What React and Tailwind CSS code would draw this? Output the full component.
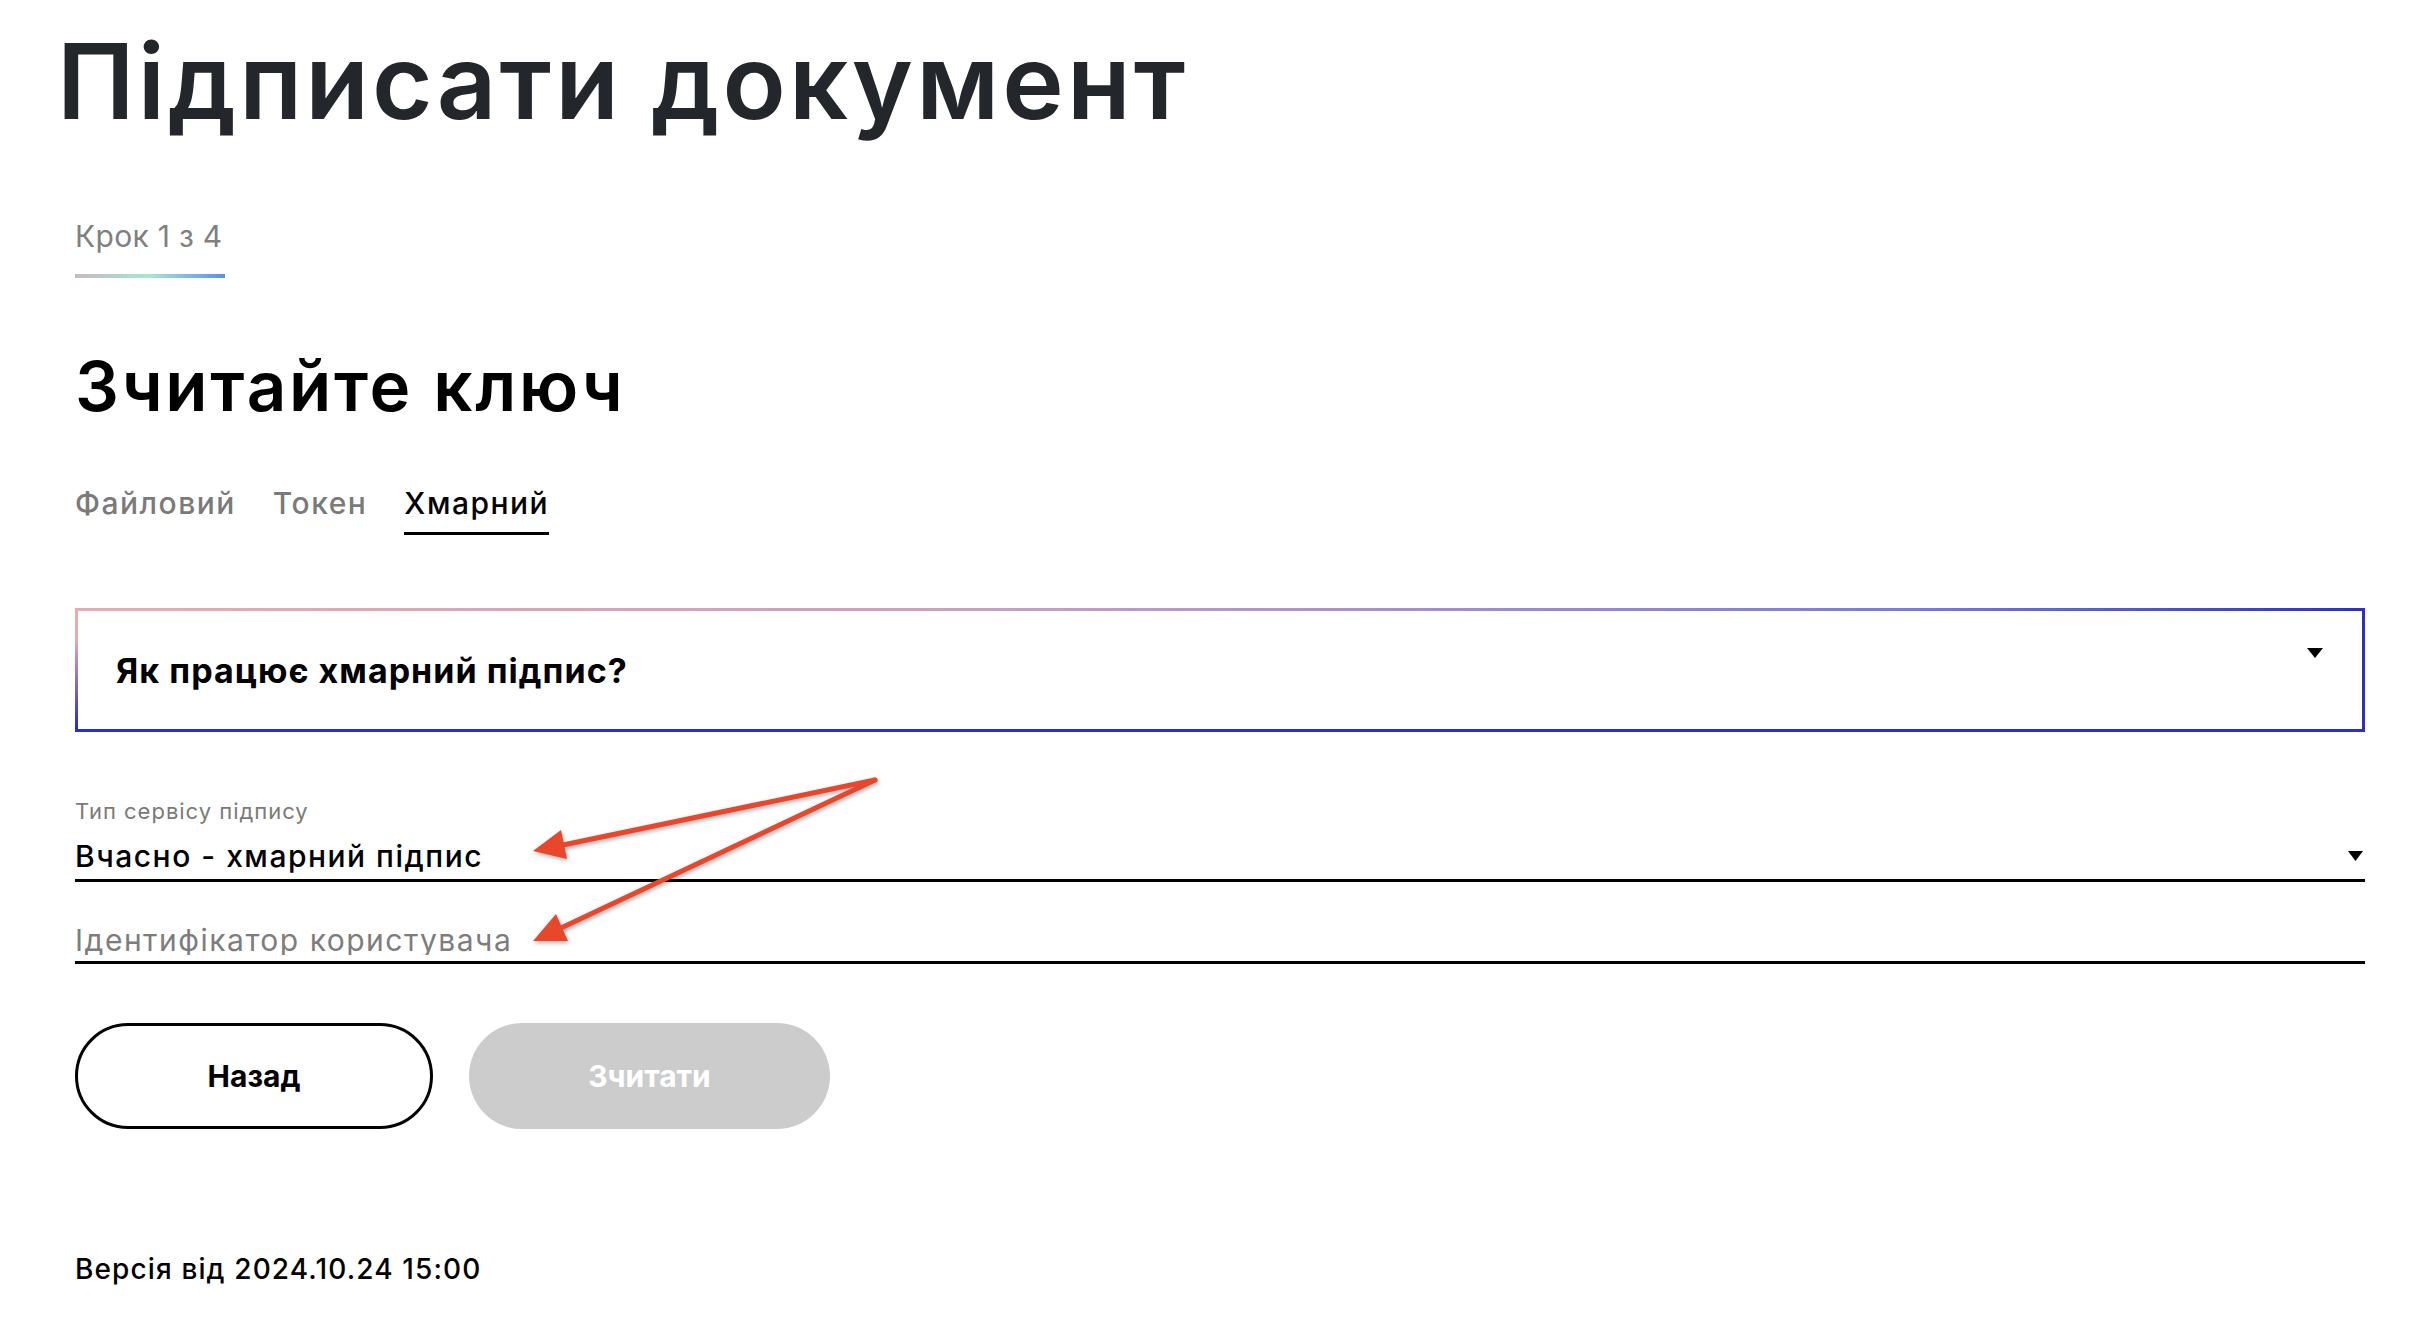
import { useState } from "react";

const tabs = ["Файловий", "Токен", "Хмарний"];

function Caret({ className }) {
  return (
    <svg width="16" height="10" viewBox="0 0 16 10" className={className}>
      <polygon points="0,0 16,0 8,10" fill="#000" />
    </svg>
  );
}

export default function App() {
  const [tab, setTab] = useState("Хмарний");

  return (
    <div className="relative min-h-[1340px] bg-white font-['Inter','Liberation_Sans',sans-serif] text-black">
      <h1 className="pl-[57px] pt-[29px] text-[104px] leading-none font-semibold tracking-[0.03em] text-[#23272b]">
        Підписати документ
      </h1>

      <div className="pl-[75px] pr-[68px]">
        {/* step */}
        <div className="mt-[88px] w-[150px]">
          <div className="whitespace-nowrap text-[30px] leading-[30px] text-[#808080] tracking-[0.01em]">Крок 1 з 4</div>
          <div className="mt-[23px] h-[4px] w-full bg-[linear-gradient(to_right,#c9b9c2,#a6e8cf_50%,#5a8cf0)]" />
        </div>

        <h2 className="mt-[74px] text-[69px] leading-[69px] font-semibold tracking-[0.04em]">Зчитайте ключ</h2>

        {/* key type tabs */}
        <div className="mt-[67px] flex gap-[37px]">
          {tabs.map((t) => (
            <button
              key={t}
              type="button"
              onClick={() => setTab(t)}
              className={
                "pb-[14px] text-[30px] leading-[30px] font-medium tracking-[0.05em] border-b-[3px] " +
                (tab === t ? "text-black border-black" : "text-[#7a7a7a] border-transparent")
              }
            >
              {t}
            </button>
          ))}
        </div>

        {/* accordion */}
        <div className="mt-[73px] p-[3px] bg-[image:linear-gradient(to_bottom,transparent_25%,#2a2fc8_95%),linear-gradient(to_right,#e8acac,#c7a0c2_40%,#7a7ae4_80%,#2a2fc8)]">
          <div className="flex h-[118px] items-center justify-between bg-white pl-[38px] pr-[39px]">
            <span className="text-[34px] font-bold tracking-[0.03em]">Як працює хмарний підпис?</span>
            <Caret className="self-start mt-[37px]" />
          </div>
        </div>

        {/* service type select */}
        <div className="mt-[68px] text-[22px] leading-[22px] text-[#7a7a7a] tracking-[0.045em]">Тип сервісу підпису</div>
        <div className="mt-[19px] flex items-center justify-between border-b-[3px] border-black pb-[8px]">
          <span className="text-[30px] leading-[30px] font-medium tracking-[0.05em]">Вчасно - хмарний підпис</span>
          <svg width="15" height="10" viewBox="0 0 15 10" className="mr-[2px]">
            <polygon points="0,0 15,0 7.5,10" fill="#000" />
          </svg>
        </div>

        {/* user id */}
        <div className="pt-[43px] pb-[6px] border-b-[3px] border-black">
          <input
            type="text"
            placeholder="Ідентифікатор користувача"
            className="block w-full h-[30px] bg-transparent text-[30px] leading-[30px] tracking-[0.05em] outline-none placeholder:text-[#7d7d7d]"
          />
        </div>

        {/* actions */}
        <div className="mt-[59px] flex gap-[36px]">
          <button
            type="button"
            className="h-[106px] w-[358px] rounded-full border-[3px] border-black bg-white text-[30px] font-bold"
          >
            Назад
          </button>
          <button
            type="button"
            disabled
            className="h-[106px] w-[361px] rounded-full bg-[#cccccc] text-[30px] font-bold text-white"
          >
            Зчитати
          </button>
        </div>

        <div className="mt-[126px] text-[28px] leading-[28px] font-medium tracking-[0.04em]">Версія від 2024.10.24 15:00</div>
      </div>

      {/* annotation arrows */}
      <svg
        className="absolute left-0 top-0 pointer-events-none drop-shadow-[1px_2px_2px_rgba(0,0,0,0.3)]"
        width="2433"
        height="1340"
        viewBox="0 0 2433 1340"
      >
        <g stroke="#e9472b" strokeWidth="5" strokeLinecap="round" fill="#e9472b">
          <line x1="875" y1="780" x2="563" y2="845" />
          <line x1="875" y1="780" x2="561" y2="928" />
        </g>
        <polygon points="533,851 561,830 567,859" fill="#e9472b" />
        <polygon points="533,941 556,914 568,941" fill="#e9472b" />
      </svg>
    </div>
  );
}
